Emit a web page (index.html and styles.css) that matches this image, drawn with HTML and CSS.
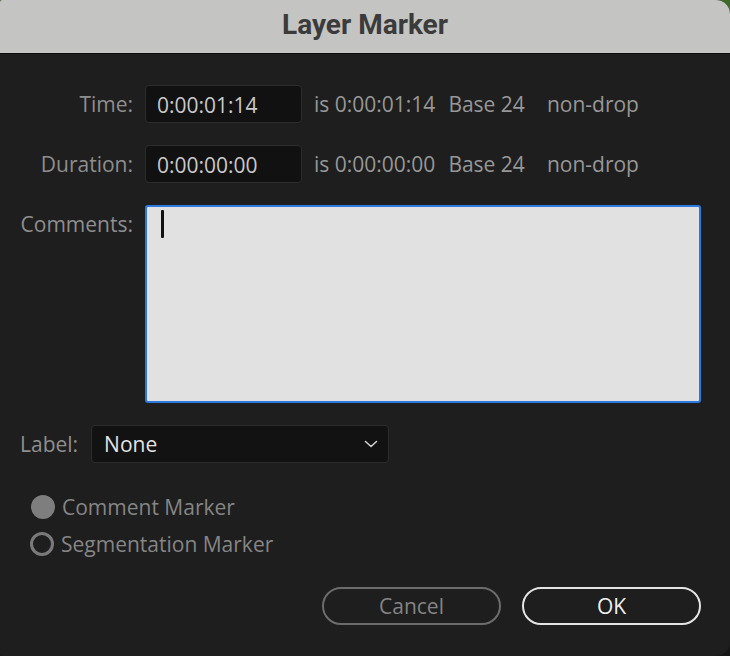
FILE: index.html
```html
<!DOCTYPE html>
<html>
<head>
<meta charset="utf-8">
<link rel="stylesheet" href="styles.css">
</head>
<body>
<div class="dialog">
  <div class="titlebar">Layer Marker</div>
  <div class="content">
    <div class="form">
      <div class="lbl">Time:</div>
      <div class="row">
        <div class="tc">0:00:01:14</div>
        <span class="info">is 0:00:01:14</span>
        <span class="info base">Base 24</span>
        <span class="info nd">non-drop</span>
      </div>
      <div class="lbl">Duration:</div>
      <div class="row">
        <div class="tc">0:00:00:00</div>
        <span class="info">is 0:00:00:00</span>
        <span class="info base">Base 24</span>
        <span class="info nd">non-drop</span>
      </div>
      <div class="lbl lbl-top">Comments:</div>
      <div class="comments"><span class="caret"></span></div>
    </div>
    <div class="labelrow">
      <span class="lbl">Label:</span>
      <div class="select">
        <span>None</span>
        <svg width="16" height="10" viewBox="0 0 16 10"><path d="M2.5 2.5 L8 7.5 L13.5 2.5" fill="none" stroke="#cfcfcf" stroke-width="1.6" stroke-linecap="round" stroke-linejoin="round"/></svg>
      </div>
    </div>
    <div class="radios">
      <div class="radio"><span class="dot filled"></span><span>Comment Marker</span></div>
      <div class="radio"><span class="dot ring"></span><span>Segmentation Marker</span></div>
    </div>
    <div class="buttons">
      <div class="btn cancel">Cancel</div>
      <div class="btn ok">OK</div>
    </div>
  </div>
</div>
</body>
</html>
```
FILE: styles.css
```css
html, body {
  margin: 0;
  padding: 0;
  width: 730px;
  height: 656px;
  overflow: hidden;
}
body {
  background: linear-gradient(#3d6a27 0, #3d6a27 30px, #161616 30px);
  font-family: "Open Sans", Lato, sans-serif;
}
.dialog {
  width: 730px;
  height: 656px;
  background: #1e1e1e;
  border-radius: 2px 14px 14px 2px;
  overflow: hidden;
  display: flex;
  flex-direction: column;
}
.titlebar {
  background: #c4c4c2;
  border-bottom: 1px solid #0c0c0c;
  display: flex;
  align-items: center;
  justify-content: center;
  font-family: Roboto, "Liberation Sans", sans-serif;
  font-weight: 700;
  font-size: 28px;
  color: #3b3b3b;
  padding-bottom: 5px;
  box-sizing: border-box;
  height: 54px;
}
.content {
  padding: 31px 29px 0 0;
  display: flex;
  flex-direction: column;
}
.form {
  display: grid;
  grid-template-columns: 133px 1fr;
  column-gap: 12px;
  row-gap: 22px;
  align-items: center;
}
.lbl {
  text-align: right;
  color: #8e8e8e;
  font-size: 21px;
}
.lbl-top {
  align-self: start;
  padding-top: 5px;
}
.row {
  display: flex;
  align-items: center;
}
.tc {
  width: 155px;
  height: 36px;
  box-sizing: content-box;
  background: #111111;
  border: 1px solid #2c2c2c;
  border-radius: 4px;
  color: #c9c9c9;
  font-size: 21px;
  line-height: 38px;
  text-indent: 11px;
  margin-right: 12px;
}
.info {
  color: #979797;
  font-size: 21px;
}
.base { margin-left: 13px; }
.nd { margin-left: 22px; }
.comments {
  height: 194px;
  background: #e1e1e1;
  border: 2px solid #2b7ae0;
  border-radius: 3px;
  position: relative;
}
.caret {
  position: absolute;
  left: 14px;
  top: 3px;
  width: 3px;
  height: 28px;
  background: #111;
  border-radius: 1px;
}
.labelrow {
  display: flex;
  align-items: center;
  margin-top: 22px;
  padding-left: 20px;
  gap: 13px;
}
.labelrow .lbl { text-align: left; }
.select {
  width: 275px;
  height: 36px;
  background: #121212;
  border: 1px solid #2c2c2c;
  border-radius: 4px;
  display: flex;
  align-items: center;
  justify-content: space-between;
  padding: 0 9px 0 12px;
  color: #e2e2e2;
  font-size: 21px;
}
.radios {
  margin-top: 32px;
  padding-left: 30px;
  display: flex;
  flex-direction: column;
  gap: 13px;
}
.radio {
  display: flex;
  align-items: center;
  gap: 7px;
  color: #858585;
  font-size: 21px;
  height: 24px;
}
.dot {
  width: 24px;
  height: 24px;
  border-radius: 50%;
  box-sizing: border-box;
}
.filled { background: #7e7e7e; margin-left: 1px; }
.ring { border: 3px solid #7a7a7a; }
.buttons {
  display: flex;
  justify-content: flex-end;
  gap: 21px;
  margin-top: 31px;
}
.btn {
  width: 179px;
  height: 38px;
  box-sizing: border-box;
  border-radius: 19px;
  display: flex;
  align-items: center;
  justify-content: center;
  font-size: 21px;
}
.cancel {
  border: 2px solid #6c6c6c;
  color: #848484;
}
.ok {
  border: 2px solid #e4e4e4;
  color: #f0f0f0;
}
```
